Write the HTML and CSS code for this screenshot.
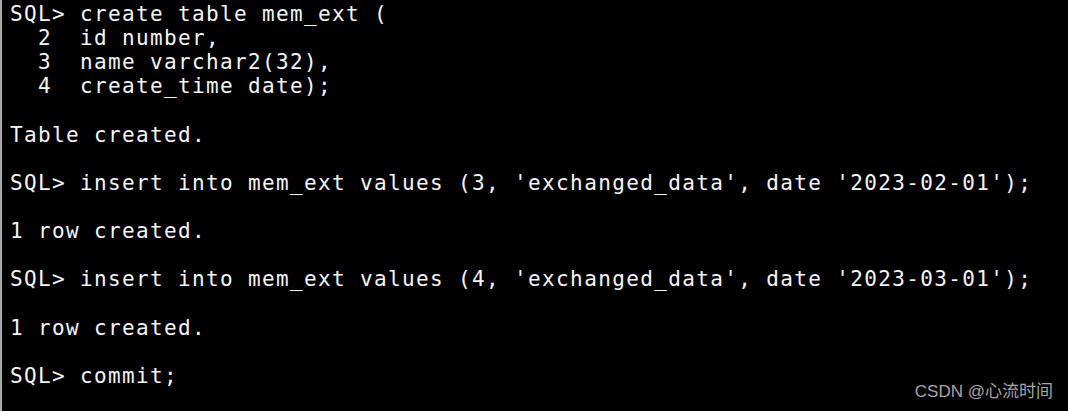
FILE: index.html
```html
<!DOCTYPE html>
<html lang="en">
<head>
<meta charset="utf-8">
<title>SQL*Plus</title>
<link rel="stylesheet" href="styles.css">
</head>
<body>
<div class="terminal">
<pre class="console">SQL&gt; create table mem_ext (
  2  id number,
  3  name varchar2(32),
  4  create_time date);

Table created.

SQL&gt; insert into mem_ext values (3, 'exchanged_data', date '2023-02-01');

1 row created.

SQL&gt; insert into mem_ext values (4, 'exchanged_data', date '2023-03-01');

1 row created.

SQL&gt; commit;</pre>
<div class="watermark">CSDN @心流时间</div>
</div>
</body>
</html>
```

FILE: styles.css
```css
html, body {
  margin: 0;
  padding: 0;
  background: #000;
}

.terminal {
  position: relative;
  width: 1068px;
  height: 411px;
  box-sizing: border-box;
  background: #000;
  border-left: 2px solid #a8a8a8;
  overflow: hidden;
}

.console {
  margin: 0;
  padding: 2px 0 0 8px;
  font-family: "DejaVu Sans Mono", monospace;
  font-size: 21px;
  letter-spacing: 1.36px;
  line-height: 24.13px;
  color: #f6f6f6;
  white-space: pre;
}

.watermark {
  position: absolute;
  right: 15px;
  bottom: 8px;
  font-family: "Liberation Sans", "Noto Sans CJK SC", sans-serif;
  font-size: 17px;
  color: #a6a6a6;
  line-height: 22px;
  white-space: nowrap;
}
```
